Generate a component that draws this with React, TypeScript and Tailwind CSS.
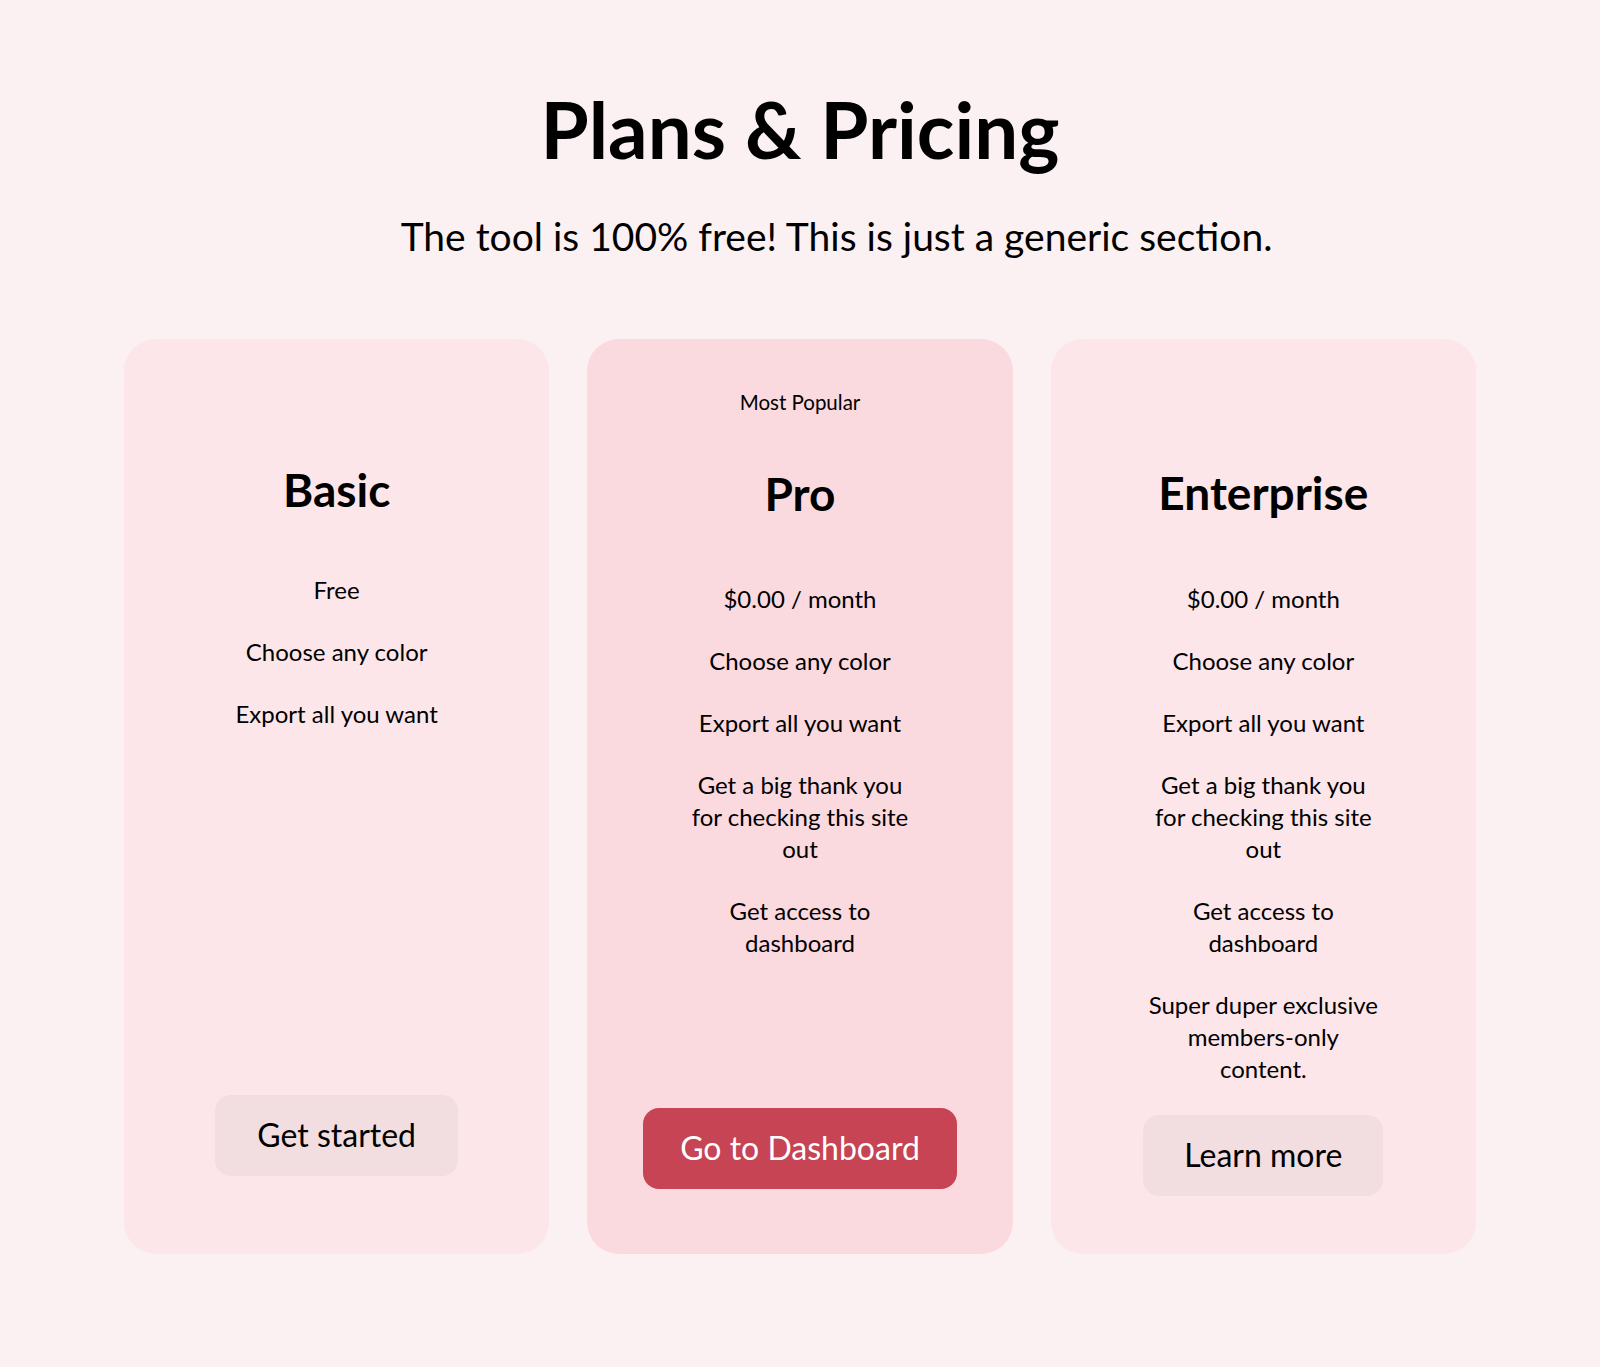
import React from "react";

const font = { fontFamily: "Lato, 'Noto Sans', sans-serif" };

function Item({ children }: { children: React.ReactNode }) {
  return <li className="text-2xl leading-8 text-black">{children}</li>;
}

export default function App() {
  return (
    <div
      className="min-h-screen bg-[#fbf0f2] pt-[83px] pb-[112px] text-center text-black"
      style={font}
    >
      <h1 className="text-[78px] font-bold leading-[1.2]">Plans &amp; Pricing</h1>
      <p className="mt-[36px] pl-[73px] text-[39px] leading-[1.2]">
        The tool is 100% free! This is just a generic section.
      </p>

      <div className="mt-[80px] grid grid-cols-3 gap-[38px] px-[124px]">
        {/* Basic */}
        <div className="flex flex-col items-center rounded-[32px] bg-[#fce6e9] pt-[123px] pb-[78px]">
          <h2 className="text-[46px] font-bold leading-[1.2]">Basic</h2>
          <ul className="mt-[56px] flex w-[236px] flex-col gap-[30px]">
            <Item>Free</Item>
            <Item>Choose any color</Item>
            <Item>Export all you want</Item>
          </ul>
          <button className="mt-auto rounded-2xl bg-[#f2dde0] px-[42px] py-[22.5px] text-[32px] leading-[36px] text-black">
            Get started
          </button>
        </div>

        {/* Pro */}
        <div className="flex flex-col items-center rounded-[32px] bg-[#fadade] pt-[51px] pb-[65px]">
          <p className="text-[20.5px] leading-[1.2]">Most Popular</p>
          <h2 className="mt-[51px] text-[46px] font-bold leading-[1.2]">Pro</h2>
          <ul className="mt-[62px] flex w-[236px] flex-col gap-[30px]">
            <Item>$0.00 / month</Item>
            <Item>Choose any color</Item>
            <Item>Export all you want</Item>
            <Item>Get a big thank you for checking this site out</Item>
            <Item>Get access to dashboard</Item>
          </ul>
          <button className="mt-auto rounded-2xl bg-[#c64453] px-[37.5px] py-[22.5px] text-[32px] leading-[36px] text-white">
            Go to Dashboard
          </button>
        </div>

        {/* Enterprise */}
        <div className="flex flex-col items-center rounded-[32px] bg-[#fce6e9] pt-[126px] pb-[58px]">
          <h2 className="text-[46px] font-bold leading-[1.2]">Enterprise</h2>
          <ul className="mt-[62px] flex w-[236px] flex-col gap-[30px]">
            <Item>$0.00 / month</Item>
            <Item>Choose any color</Item>
            <Item>Export all you want</Item>
            <Item>Get a big thank you for checking this site out</Item>
            <Item>Get access to dashboard</Item>
            <Item>Super duper exclusive members-only content.</Item>
          </ul>
          <button className="mt-[30px] rounded-2xl bg-[#f2dde0] px-[41px] py-[22.5px] text-[32px] leading-[36px] text-black">
            Learn more
          </button>
        </div>
      </div>
    </div>
  );
}
